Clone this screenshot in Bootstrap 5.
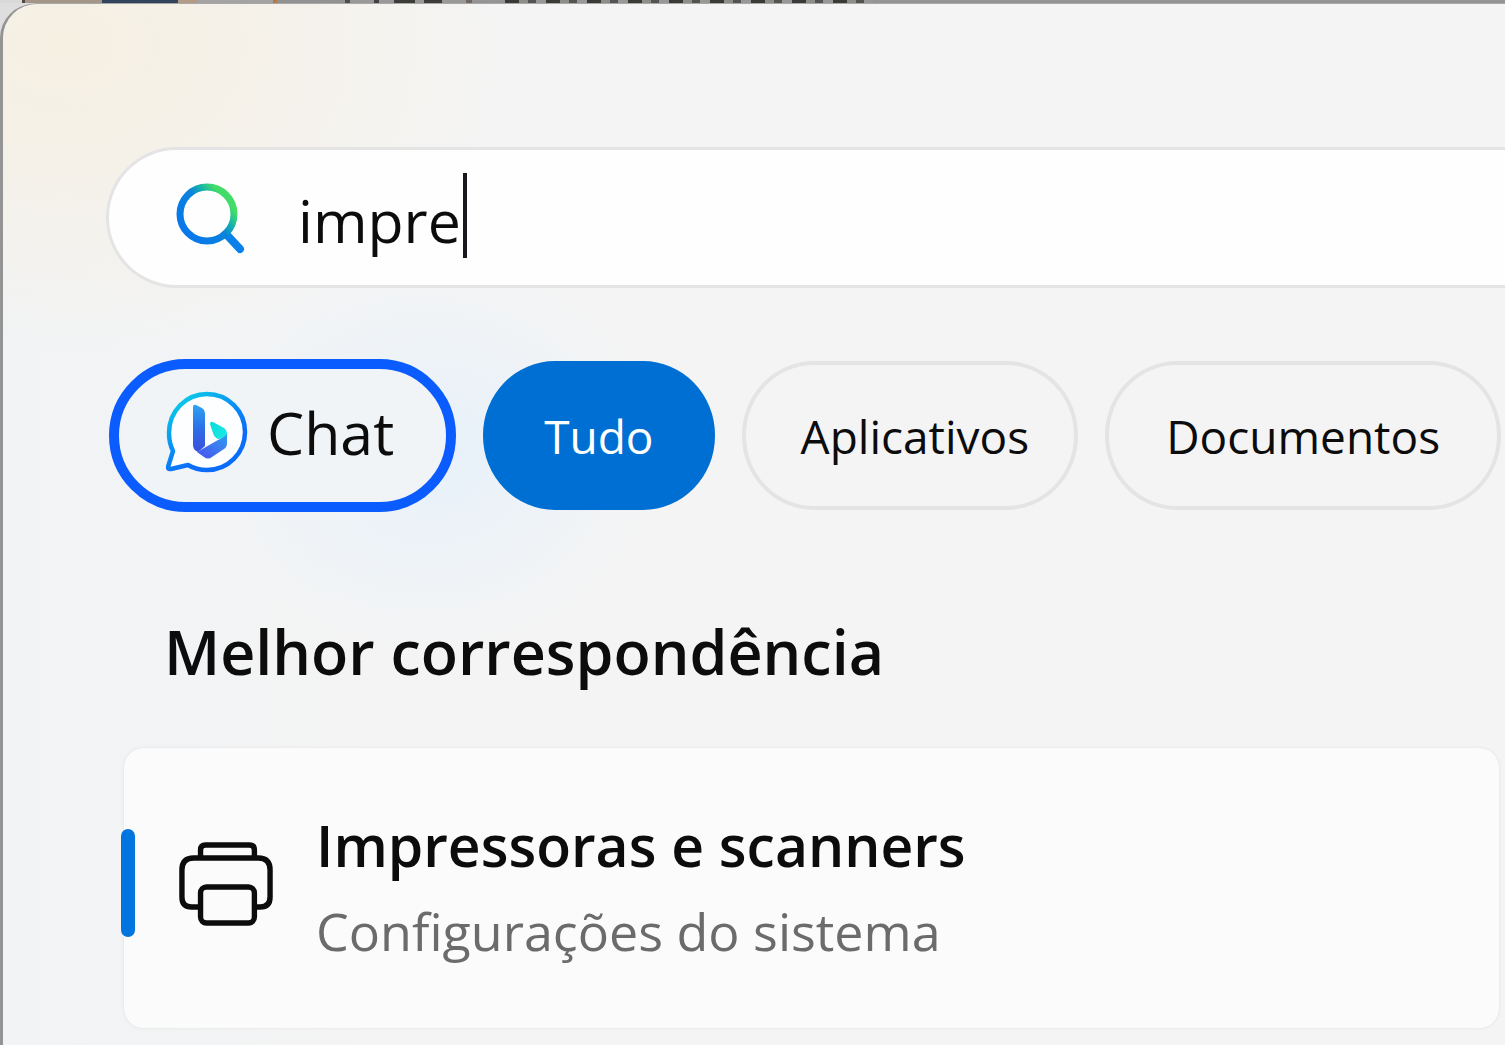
<!DOCTYPE html>
<html lang="pt-BR">
<head>
<meta charset="utf-8">
<meta name="viewport" content="width=device-width, initial-scale=1">
<title>Pesquisar</title>
<link rel="stylesheet" href="https://cdn.jsdelivr.net/npm/bootstrap@5.3.0/dist/css/bootstrap.min.css">
<style>
  body {
    font-family: "Open Sans", "Noto Sans", sans-serif;
    color: #0c0c0c;
    overflow: hidden;
    background:
      repeating-linear-gradient(90deg, #3a3936 0 14px, #8d8d8c 14px 23px, #55534f 23px 31px, #989898 31px 41px) 505px 0 / 368px 3px no-repeat,
      linear-gradient(90deg, #d9d9d9 22px, #54483e 22px 25px, #a39587 25px 102px, #34435c 102px 178px, #b29c88 178px 198px, #a3a3a3 198px 273px, #b27b45 273px 277px, #929292 277px 345px, #4d4d4b 345px 350px, #999 350px 374px, #424240 374px 379px, #999 379px 394px, #3c3c3a 394px 415px, #999 415px 424px, #3c3c3a 424px 442px, #999 442px 466px, #6f675f 466px 472px, #949494 472px) 0 0 / 100% 3px no-repeat,
      linear-gradient(#dedede 30px, #8a898d 110px, #98979b);
  }
  .search-panel {
    min-height: 100vh;
    margin: 4px 0 0 3px;
    padding-top: 143px;
    border-top-left-radius: 34px;
    box-shadow: -3px 0 0 #949494, 0 -1px 0 #a8a8a8;
    background:
      radial-gradient(ellipse 230px 200px at 430px 450px, #e7f1fa 0%, #e7f1fa00 100%),
      radial-gradient(ellipse 440px 310px at 60px 40px, #f6f0e3 0%, #f6f0e3cc 30%, #f6f0e300 100%),
      linear-gradient(90deg, #f1f3f5, #f4f4f4 420px);
  }
  .search-field {
    height: 141px;
    margin-left: 103px;
    padding-left: 66px;
    background: #fefefe;
    border: 3px solid #e4e4e4;
    border-right: 0;
  }
  .search-icon { width: 72px; height: 72px; margin-right: 51px; }
  .search-input {
    padding: 4px 0 0;
    font-size: 59px;
    line-height: 80px;
    color: #0c0c0c;
    caret-color: transparent;
    box-shadow: none;
  }
  .search-caret { left: 165px; top: -3px; width: 4px; height: 85px; background: #17191c; }
  .filter-row { gap: 27px; margin: 71px 0 0 106px; }
  .filter-pill {
    height: 149px;
    padding: 0 57px;
    font-size: 46px;
    line-height: 64px;
    color: #0c0c0c;
    border: 4px solid #e4e4e4;
    border-radius: 72px / 74px;
  }
  .filter-pill.filter-on { background: #006fd3; border-color: #006fd3; color: #fff; }
  .filter-pill.filter-snug { padding: 0 45px 0 55px; }
  .filter-pill.filter-chat {
    height: 153px;
    padding: 0 52px 8px 47px;
    gap: 19px;
    font-size: 59px;
    background: #f1f4f6;
    border: 10px solid #0b5cff;
    border-radius: 78px;
  }
  .chat-icon { width: 82px; height: 82px; }
  .section-title { margin: 96px 0 0 161px; font-size: 61px; line-height: 88px; font-weight: 600; }
  .result-card {
    min-height: 280px;
    margin: 52px 6px 0 121px;
    padding-left: 55px;
    gap: 43px;
    color: #0c0c0c;
    background: #fbfbfb;
    border-radius: 20px;
    box-shadow: 0 0 3px #dedede;
  }
  .result-card::before {
    content: "";
    position: absolute;
    left: -3px;
    top: 81px;
    width: 14px;
    height: 108px;
    border-radius: 7px;
    background: #0075e0;
  }
  .printer-icon { width: 94px; height: 84px; margin-bottom: 8px; }
  .result-name { font-size: 57px; line-height: 86px; font-weight: 600; }
  .result-kind { font-size: 52px; line-height: 86px; color: #6b6b6b; }
</style>
</head>
<body>
<main class="search-panel">
  <form role="search">
    <div class="search-field rounded-start-pill d-flex align-items-center">
      <svg class="search-icon flex-shrink-0" viewBox="0 0 72 72" fill="none" aria-hidden="true">
        <defs>
          <linearGradient id="lens" x1="12" y1="50" x2="56" y2="14" gradientUnits="userSpaceOnUse">
            <stop offset="0" stop-color="#0878ea"/><stop offset=".5" stop-color="#0a83dc"/><stop offset=".7" stop-color="#18b7a5"/><stop offset=".88" stop-color="#43dc68"/>
          </linearGradient>
        </defs>
        <path d="M51 52 65 67" stroke="#0a80ea" stroke-width="8" stroke-linecap="round"/>
        <circle cx="32" cy="32" r="27" stroke="url(#lens)" stroke-width="7"/>
      </svg>
      <div class="position-relative flex-grow-1">
        <input class="search-input form-control border-0 bg-transparent" id="query" type="text" value="impre" aria-label="Pesquisar" autocomplete="off" spellcheck="false">
        <span class="search-caret position-absolute"></span>
      </div>
    </div>
  </form>

  <nav class="filter-row d-flex align-items-center" aria-label="Filtros">
    <button type="button" class="filter-pill filter-chat btn d-flex align-items-center flex-shrink-0">
      <svg class="chat-icon" viewBox="0 0 82 82" fill="none" aria-hidden="true">
        <defs>
          <linearGradient id="ring" x1="12" y1="10" x2="48" y2="62" gradientUnits="userSpaceOnUse">
            <stop offset="0" stop-color="#0cc8e8"/><stop offset=".55" stop-color="#0a8ff5"/><stop offset="1" stop-color="#0a6cf8"/>
          </linearGradient>
          <linearGradient id="stem" x1="0" y1="0" x2="0" y2="1">
            <stop offset="0" stop-color="#2fa3f3"/><stop offset=".5" stop-color="#2c6fe6"/><stop offset="1" stop-color="#3b4fdc"/>
          </linearGradient>
          <linearGradient id="bowl" x1="0" y1="1" x2="1" y2="0">
            <stop offset="0" stop-color="#4a50ee"/><stop offset="1" stop-color="#2f9df0"/>
          </linearGradient>
          <linearGradient id="tip" x1="0" y1="0" x2="1" y2="1">
            <stop offset="0" stop-color="#08dcdc"/><stop offset="1" stop-color="#22e8e4"/>
          </linearGradient>
        </defs>
        <path d="M7 60C4 54 3 49 3 42 3 20 20 3 41 3s38 17 38 38-17 38-38 38c-7 0-14-2-19-5L5 78q-3 0-3-2Z" fill="#fdfeff" stroke="url(#ring)" stroke-width="4.5" stroke-linejoin="round"/>
        <path d="M27 16q0-3 3-2l6 3q3 2 3 6V55l-7 6q-5-2-5-7Z" fill="url(#stem)"/>
        <path d="M44 33q0-3 3-2l11 6q3 2 3 5v5l-9 1q-4-2-5-6Z" fill="url(#tip)"/>
        <path d="M31 61 52 49Q59 46 61 43v9q0 4-3 6L46 66q-4 3-8 0Z" fill="url(#bowl)"/>
      </svg>
      Chat
    </button>
    <button type="button" class="filter-pill filter-on btn flex-shrink-0">Tudo</button>
    <button type="button" class="filter-pill filter-snug btn flex-shrink-0">Aplicativos</button>
    <button type="button" class="filter-pill btn flex-shrink-0">Documentos</button>
  </nav>

  <h2 class="section-title">Melhor correspondência</h2>

  <a href="#impressoras" class="result-card position-relative d-flex align-items-center text-decoration-none">
    <svg class="printer-icon flex-shrink-0" viewBox="0 0 96 84" preserveAspectRatio="none" fill="none" stroke="#0c0c0c" stroke-width="5.5" aria-hidden="true">
      <path d="M22 16V8q0-5 5-5h45q5 0 5 5v8"/>
      <path d="M22 65H13q-10 0-10-10V28Q3 16 15 16H81q12 0 12 12V55q0 10-10 10H77"/>
      <rect x="22" y="45" width="55" height="36" rx="6"/>
    </svg>
    <span class="d-flex flex-column">
      <span class="result-name">Impressoras e scanners</span>
      <span class="result-kind">Configurações do sistema</span>
    </span>
  </a>
</main>
<script src="https://cdn.jsdelivr.net/npm/bootstrap@5.3.0/dist/js/bootstrap.bundle.min.js"></script>
</body>
</html>
